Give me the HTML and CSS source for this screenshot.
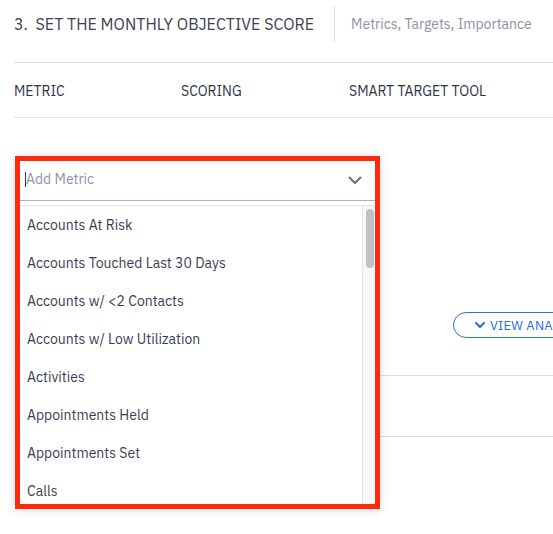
FILE: index.html
```html
<!DOCTYPE html>
<html>
<head>
<meta charset="utf-8">
<title>Monthly Objective Score</title>
<link rel="stylesheet" href="styles.css">
</head>
<body>
<div class="page">
  <div class="step-header">
    <h2 class="step-title">3.&nbsp; SET THE MONTHLY OBJECTIVE SCORE</h2>
    <div class="step-sub">Metrics, Targets, Importance</div>
  </div>
  <div class="cols">
    <div class="col-h">METRIC</div>
    <div class="col-h">SCORING</div>
    <div class="col-h">SMART TARGET TOOL</div>
  </div>
  <div class="row row-main">
    <div class="cell"></div>
    <div class="cell"></div>
    <div class="cell cell-tool">
      <button class="pill">
        <svg class="pill-icon" width="10" height="7" viewBox="0 0 10 7"><path d="M1 1 L5 5 L9 1" fill="none" stroke="#2a6adf" stroke-width="2" stroke-linecap="round" stroke-linejoin="round"/></svg>
        <span>VIEW ANALYTICS</span>
      </button>
    </div>
  </div>
  <div class="row row-second"></div>

  <div class="dropdown">
    <div class="select">
      <span class="caret"></span>
      <span class="placeholder">Add Metric</span>
      <svg class="chev" width="14" height="9" viewBox="0 0 14 9"><path d="M1.5 1.5 L7 7 L12.5 1.5" fill="none" stroke="#6b6f80" stroke-width="2" stroke-linecap="round" stroke-linejoin="round"/></svg>
    </div>
    <div class="menu">
      <ul class="options">
        <li>Accounts At Risk</li>
        <li>Accounts Touched Last 30 Days</li>
        <li>Accounts w/ &lt;2 Contacts</li>
        <li>Accounts w/ Low Utilization</li>
        <li>Activities</li>
        <li>Appointments Held</li>
        <li>Appointments Set</li>
        <li>Calls</li>
      </ul>
      <div class="track"><div class="thumb"></div></div>
    </div>
  </div>
</div>
</body>
</html>
```
FILE: styles.css
```css
* { box-sizing: border-box; }

body {
  margin: 0;
  background: #ffffff;
  font-family: "IBM Plex Sans", Roboto, "Liberation Sans", sans-serif;
  overflow: hidden;
}

.page {
  position: relative;
  width: 553px;
  height: 534px;
  padding-left: 14px;
  overflow: hidden;
}

.step-header {
  display: flex;
  align-items: center;
  padding-top: 6px;
  padding-bottom: 20px;
  height: 63px;
  border-bottom: 1px solid #dcdce6;
  white-space: nowrap;
}

.step-title {
  margin: 0;
  font-size: 16px;
  font-weight: 400;
  color: #3e4150;
}

.step-sub {
  margin-left: 20px;
  padding-left: 16px;
  height: 36px;
  display: flex;
  align-items: center;
  border-left: 1px solid #dcdce6;
  font-size: 14px;
  color: #8d91a5;
}

.cols {
  display: grid;
  grid-template-columns: 167px 168px 1fr;
  align-items: center;
  height: 55px;
  padding-top: 2px;
  border-bottom: 1px solid #dcdce6;
}

.col-h {
  font-size: 14px;
  color: #2f3345;
  white-space: nowrap;
}

.row {
  display: grid;
  grid-template-columns: 167px 168px 1fr;
  border-bottom: 1px solid #dcdce6;
}

.row-main { height: 258px; }
.row-second { height: 61px; }

.cell-tool {
  padding-top: 194px;
  padding-left: 104px;
}

.pill {
  display: flex;
  align-items: center;
  gap: 5px;
  height: 26px;
  padding: 0 16px 0 21px;
  border: 1px solid #2f6fe0;
  border-radius: 13px;
  background: #ffffff;
  color: #2a6adf;
  font-family: inherit;
  font-size: 13px;
  letter-spacing: 0.2px;
  white-space: nowrap;
}

.pill-icon { flex: none; }

/* dropdown menu lying over the row */
.dropdown {
  position: absolute;
  left: 15px;
  top: 156px;
  width: 365px;
  height: 353px;
  border: 5px solid #ff2a0c;
  background: #ffffff;
  box-shadow: 0 1px 10px rgba(0, 0, 0, 0.14);
  display: flex;
  flex-direction: column;
}

.select {
  display: flex;
  align-items: center;
  height: 40px;
  padding: 0 13px 3px 5px;
  border-bottom: 1px solid #abb0c3;
  flex: none;
}

.caret {
  width: 1px;
  height: 15px;
  background: #333645;
}

.placeholder {
  flex: 1;
  font-size: 14px;
  color: #8e92a5;
}

.chev { flex: none; margin-top: 2px; }

.menu {
  margin-top: 4px;
  border-top: 1px solid #e2e2e8;
  flex: 1;
  min-height: 0;
  display: flex;
  overflow: hidden;
}

.options {
  list-style: none;
  margin: 0;
  padding: 0;
  flex: 1;
}

.options li {
  height: 38px;
  line-height: 38px;
  padding-left: 7px;
  font-size: 14px;
  color: #3a3e52;
  white-space: nowrap;
}

.track {
  width: 13px;
  flex: none;
  background: #f8f8f8;
  border-left: 1px solid #e4e4e4;
  padding: 3px 0 0 3px;
}

.thumb {
  width: 8px;
  height: 59px;
  border-radius: 4px;
  background: #c1c1c1;
}
```
